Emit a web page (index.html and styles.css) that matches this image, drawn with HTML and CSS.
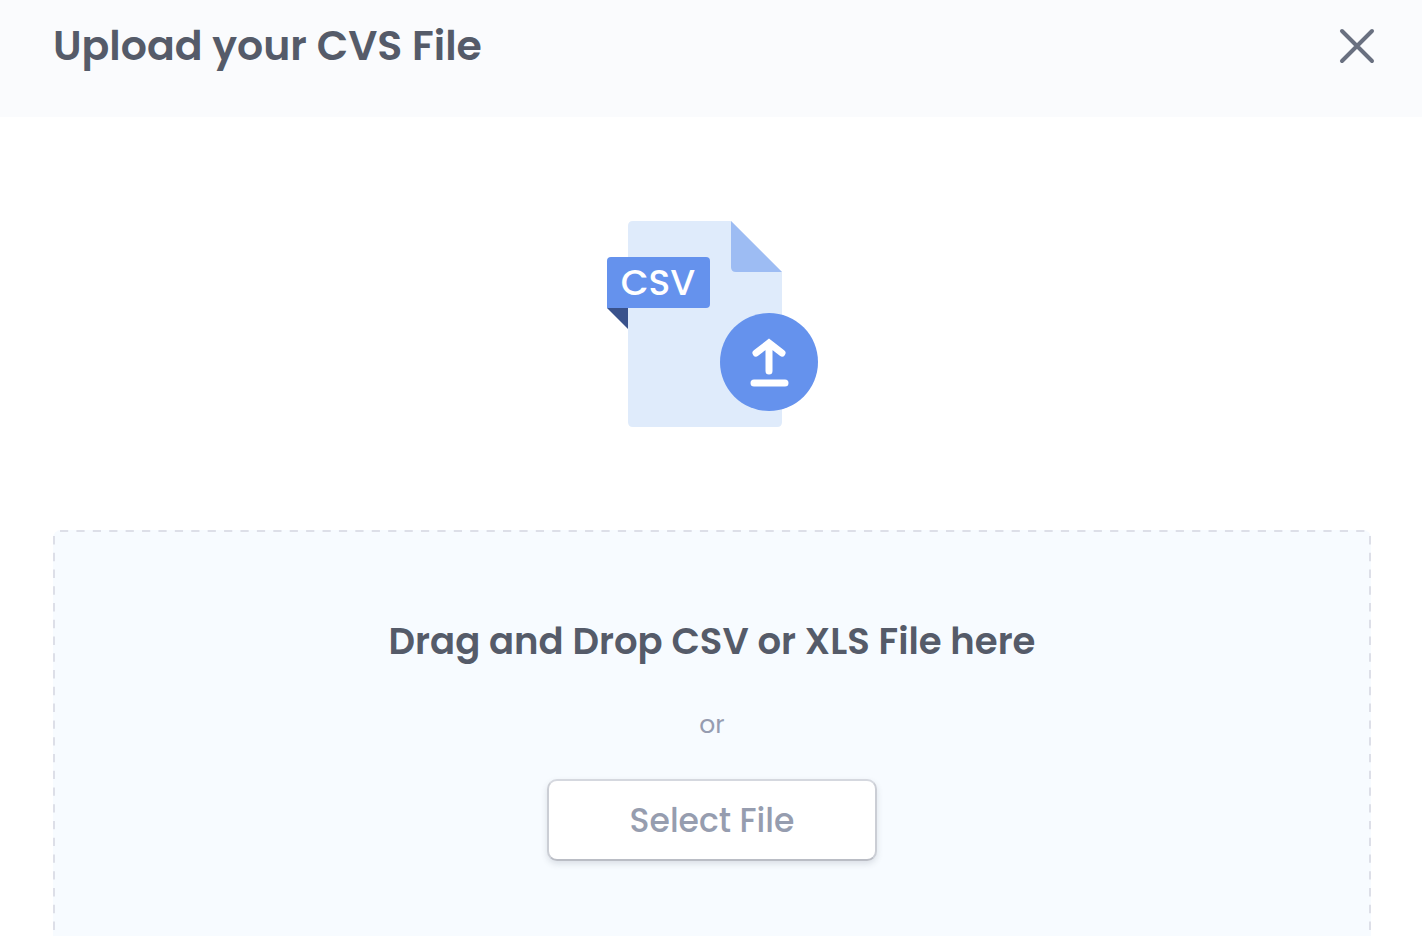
FILE: index.html
```
<!DOCTYPE html>
<html lang="en">
<head>
  <meta charset="UTF-8">
  <meta name="viewport" content="width=device-width, initial-scale=1">
  <title>Upload your CVS File</title>
  <link rel="stylesheet" href="styles.css">
</head>
<body>
  <div class="modal">
    <header class="modal-header">
      <h1 class="modal-title">Upload your CVS File</h1>
      <button class="close-button" type="button" aria-label="Close">
        <svg width="36" height="36" viewBox="0 0 36 36" fill="none" stroke="currentColor" stroke-width="4" stroke-linecap="round">
          <path d="M3 3L33 33M33 3L3 33"/>
        </svg>
      </button>
    </header>

    <main class="modal-body">
      <svg class="file-icon" width="212" height="206" viewBox="0 0 212 206" aria-hidden="true">
        <path fill="#dfebfb" d="M26 0H124L175 51V201Q175 206 170 206H26Q21 206 21 201V5Q21 0 26 0Z"/>
        <path fill="#9dbcf3" d="M124 0L175 51H129Q124 51 124 46Z"/>
        <path fill="#39528c" d="M0 87H21V108Z"/>
        <path fill="#6592ed" d="M4 36H99Q103 36 103 40V83Q103 87 99 87H0V40Q0 36 4 36Z"/>
        <text class="file-type" x="51" y="74" text-anchor="middle">CSV</text>
        <circle fill="#6592ed" cx="162" cy="141" r="49"/>
        <path fill="none" stroke="#fff" stroke-width="7" stroke-linecap="round" d="M162 150V124M149 132L162 122L175 132M147 162H178"/>
      </svg>

      <section class="drop-zone">
        <svg class="drop-outline" aria-hidden="true">
          <line x1="7" y1="1" x2="99.5%" y2="1" pathLength="159"/>
          <line x1="1" y1="6" x2="1" y2="98.5%" pathLength="47"/>
          <line x1="100%" y1="6" x2="100%" y2="98.5%" pathLength="47" class="drop-outline-right"/>
        </svg>
        <h2 class="drop-title">Drag and Drop CSV or XLS File here</h2>
        <p class="drop-or">or</p>
        <button class="select-button" type="button">Select File</button>
      </section>
    </main>
  </div>
</body>
</html>
```
FILE: styles.css
```
* {
  box-sizing: border-box;
}
body {
  margin: 0;
  font-family: Poppins, Inter, 'Liberation Sans', sans-serif;
  background-color: #fff;
  color: #555b69;
}
button {
  font-family: inherit;
  cursor: pointer;
}
.modal {
  display: flex;
  flex-direction: column;
  min-height: 100vh;
}
.modal-header {
  display: flex;
  justify-content: space-between;
  align-items: flex-start;
  padding: 21px 47px 46px 53px;
  background-color: #fafbfd;
}
.modal-title {
  margin: 0;
  font-size: 41px;
  font-weight: 600;
  line-height: 50px;
}
.close-button {
  display: flex;
  align-items: center;
  height: 50px;
  padding: 0;
  border: none;
  background: none;
  color: #697080;
}
.modal-body {
  display: flex;
  flex: 1;
  flex-direction: column;
  align-items: center;
  padding: 104px 51px 0 53px;
}
.file-icon {
  flex-shrink: 0;
  margin: 0 0 103px 2px;
}
.file-type {
  font-size: 36px;
  font-weight: 500;
  fill: #fff;
}
.drop-zone {
  position: relative;
  display: flex;
  flex: 1;
  flex-direction: column;
  align-items: center;
  width: 100%;
  padding: 87px 24px 72px;
  border-radius: 8px 8px 0 0;
  background-color: #f7fbff;
}
/* long dashes that stretch with the zone */
.drop-outline {
  position: absolute;
  inset: 0;
  width: 100%;
  height: 100%;
  stroke: #dddfe8;
  stroke-width: 2;
  stroke-dasharray: 1;
  pointer-events: none;
}
.drop-outline-right {
  transform: translateX(-1px);
}
.drop-title {
  margin: 0 0 36px;
  font-size: 37px;
  font-weight: 600;
  line-height: 48px;
  text-align: center;
}
.drop-or {
  margin: 0 0 30px;
  font-size: 25px;
  line-height: 48px;
  color: #969cb0;
}
.select-button {
  width: 330px;
  max-width: 100%;
  height: 82px;
  padding: 2px 0 0;
  border: 2px solid;
  border-color: #d5d8df #cbced5 #babdc5;
  border-radius: 10px;
  background-color: #fff;
  box-shadow: 0 3px 6px rgba(60, 70, 90, 0.15);
  font-size: 33px;
  font-weight: 500;
  color: #969daf;
}
```
